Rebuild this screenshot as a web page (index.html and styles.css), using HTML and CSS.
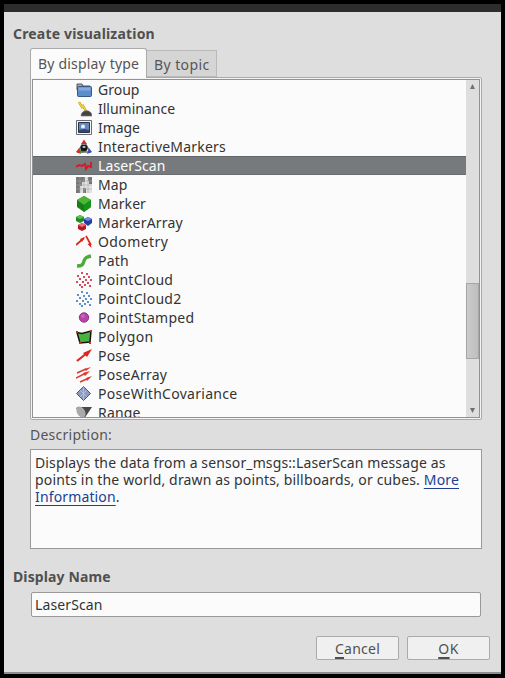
FILE: index.html
```html
<!DOCTYPE html>
<html lang="en">
<head>
<meta charset="utf-8">
<title>Create visualization</title>
<link rel="stylesheet" href="styles.css">
</head>
<body>
<main class="dialog">
  <h2 class="heading">Create visualization</h2>
  <div class="tabs"><div class="tab active"><span class="t-type">By display type</span></div><div class="tab"><span class="t-topic">By topic</span></div></div>
  <section class="pane">
    <div class="list-frame">
      <ul class="list">
        <li><svg viewBox="0 0 16 16"><path d="M1 3V2h5l1 2h7v4H1z" fill="#aaa" stroke="#555"/><rect x="1.5" y="4.5" width="14" height="10" rx="1" fill="#5c8dcb" stroke="#355886"/><path d="M2.5 5.5h12v3h-12z" fill="#85aadb"/></svg><span class="w-group">Group</span></li>
        <li><svg viewBox="0 0 16 16"><path d="M3 1l3 5 1-1 3 5" fill="none" stroke="#b79a1d" stroke-width="2.4"/><path d="M3 1l3 5 1-1 3 5" fill="none" stroke="#f7d526" stroke-width="1.4"/><path d="M5 15c0-7 11-7 11 0z" fill="#444" stroke="#777" stroke-width=".7"/></svg><span class="w-illum">Illuminance</span></li>
        <li><svg viewBox="0 0 16 16"><path d="M.5.5h15v14H.5z" fill="#f5f5f5" stroke="#6c6c6c"/><path d="M2.5 2.5h11v10h-11z" fill="#6487bd" stroke="#26364e"/><path d="M3 10l5-1 5 1v2H3z" fill="#334766"/><circle cx="7" cy="6.5" r="2" fill="#edf2fa"/></svg><span class="w-image">Image</span></li>
        <li><svg viewBox="0 0 16 16"><path d="M8 2l6 11H2z" fill="#eee" stroke="#777" stroke-width="1.5"/><path d="M8 1L5 5h6z" fill="#d92a28"/><path d="M3 9l-3 4 5 2z" fill="#d92a28"/><path d="M3 13l2-3 2 4z" fill="#32943b"/><path d="M13 9l3 4-5 2z" fill="#3355bb"/><circle cx="8" cy="9" r="3.5" fill="#171717"/><path d="M6 8l2-1 2 1-2 1z" fill="#eee"/></svg><span class="w-inter">InteractiveMarkers</span></li>
        <li class="selected"><svg viewBox="0 0 16 16"><path d="M0 9l3-2 3 1 3-2 1 5 2-3 3 1V4" fill="none" stroke="#df1722" stroke-width="1.9"/></svg><span class="w-laser">LaserScan</span></li>
        <li><svg viewBox="0 0 16 16"><path d="M0 0h16v16H0z" fill="#e2e2e2"/><path d="M0 0h9v5H6v4H4v7H0zM12 0h4v7h-3V4h-1zM7 11h3v5H7z" fill="#777"/><path d="M0 4h16M0 8h16M0 12h16M4 0v16M8 0v16M12 0v16" stroke="#aaa" stroke-width=".6"/></svg><span class="w-map">Map</span></li>
        <li><svg viewBox="0 0 16 16"><path d="M8 0l7 4v7l-7 5-7-5V4z" fill="#197d17"/><path d="M8 0l7 4-7 5-7-5z" fill="#4eb536"/><path d="M8 9v7l7-5V4z" fill="#17931b"/></svg><span class="w-marker">Marker</span></li>
        <li><svg viewBox="0 0 16 16"><path d="M4 0l4 2v4L4 8 0 6V2z" fill="#218b25"/><path d="M4 0l4 2-4 2-4-2z" fill="#62c352"/><path d="M12 2l4 2v4l-4 3-4-3V4z" fill="#263f9f"/><path d="M12 2l4 2-4 2-4-2z" fill="#6f8ee0"/><path d="M6 8l4 2v4l-4 2-4-2v-4z" fill="#b51723"/><path d="M6 8l4 2-4 2-4-2z" fill="#ed7079"/></svg><span class="w-marray">MarkerArray</span></li>
        <li><svg viewBox="0 0 16 16"><path d="M0 11l8-7M10 2l5 9" stroke="#d9291c" stroke-width="1.7"/><path d="M9 3L6 8 4 5zM15.5 14l-4-4 3-1z" fill="#d9291c"/></svg><span class="w-odom">Odometry</span></li>
        <li><svg viewBox="0 0 16 16"><path d="M1 13c6 0 6-2 7-5s2-4 7-5" fill="none" stroke="#4eaa39" stroke-width="3.4"/></svg><span class="w-path">Path</span></li>
        <li><svg viewBox="0 0 16 16"><path class="dots red" d="M6 1h0M11 2h0M2 4h0M8 5h0M13 5h0M4 7h0M10 8h0M15 8h0M1 10h0M7 10h0M12 11h0M4 13h0M9 13h0M14 14h0M6 15h0"/></svg><span class="w-pc">PointCloud</span></li>
        <li><svg viewBox="0 0 16 16"><path class="dots blue" d="M6 1h0M11 2h0M2 4h0M8 5h0M13 5h0M4 7h0M10 8h0M15 8h0M1 10h0M7 10h0M12 11h0M4 13h0M9 13h0M14 14h0M6 15h0"/></svg><span class="w-pc2">PointCloud2</span></li>
        <li><svg viewBox="0 0 16 16"><circle cx="8" cy="7.5" r="4.7" fill="#b345a7" stroke="#8c3384"/><circle cx="7" cy="6" r="2" fill="#c666bd"/></svg><span class="w-ps">PointStamped</span></li>
        <li><svg viewBox="0 0 16 16"><path d="M1 3.5l5 1 9-2.500-1 11-10 1z" fill="#48b33e" stroke="#151515" stroke-width="1.5"/><path d="M0 2h2v2H0zM14 1h2v2h-2zM13 13h2v2h-2zM3 13h2v2H3z" fill="#dd2a22"/></svg><span class="w-poly">Polygon</span></li>
        <li><svg viewBox="0 0 16 16"><path d="M1 13l10-8" stroke="#db271d" stroke-width="2.2"/><path d="M16 1l-5 8-4-4z" fill="#db271d"/></svg><span class="w-pose">Pose</span></li>
        <li><svg viewBox="0 0 16 16"><path d="M1 6l9-4M0 11l10-5M4 15l9-4" stroke="#dc3a30" stroke-width="1.5"/><path d="M15 0l-5 4-2-2zM14 4l-5 5-2-3zM16 9l-5 5-1-3z" fill="#dc3a30"/></svg><span class="w-parr">PoseArray</span></li>
        <li><svg viewBox="0 0 16 16"><path d="M7.5 .5l7 7-7 7-7-7z" fill="#8c9bc0" stroke="#48557c"/><path d="M7.5 1v13M4 4l7 7M11 4l-7 7" stroke="#bdc7df" stroke-width=".8"/></svg><span class="w-cov">PoseWithCovariance</span></li>
        <li><svg viewBox="0 0 16 16"><path d="M0 3l2-1h14L8 14z" fill="#484848"/><ellipse cx="5" cy="7" rx="4" ry="6" transform="rotate(-30 5 7)" fill="#a9a9a9"/></svg><span class="w-range">Range</span></li>
      </ul>
      <div class="scrollbar"><svg class="arrow" viewBox="0 0 13 13"><path d="M6.5 4L9 9H4z"/></svg><i class="thumb"></i><svg class="arrow" viewBox="0 0 13 13"><path d="M4 4h5L6.5 9z"/></svg></div>
    </div>
  </section>
  <div class="label"><span class="t-desc">Description:</span></div>
  <div class="description"><span class="d1">Displays the data from a sensor_msgs::LaserScan message as</span><br><span class="d2">points in the world, drawn as points, billboards, or cubes. <a>More</a></span><br><span class="d3"><a>Information</a>.</span></div>
  <h2 class="heading name-heading">Display Name</h2>
  <div class="input"><span class="w-laser">LaserScan</span></div>
  <div class="buttons"><div class="button"><span class="t-cancel"><u>C</u>ancel</span></div><div class="button"><span class="t-ok"><u>O</u>K</span></div></div>
</main>
</body>
</html>
```
FILE: styles.css
```css
* { box-sizing: border-box; }
body { margin: 0; background: #000; font: 14px "Noto Sans", sans-serif; color: #333; }
.dialog { width: 497px; height: 670px; margin: 4px; border-top: 8px solid #2d2d2d; border-bottom: 2px solid #8d8d8d; background: #dedede; display: flow-root; white-space: nowrap; }
.heading { margin: 12px 0 0 9px; font-size: 14px; line-height: 20px; height: 20px; color: #505050; letter-spacing: .18px; }
.tabs { display: flex; align-items: flex-end; height: 29px; margin: 4px 0 0 26px; }
.tab { height: 27px; width: 70px; padding-left: 7px; line-height: 27px; color: #555; background: #d5d5d5; border: 1px solid #b9b9b9; border-left: 0; }
.tab.active { position: relative; z-index: 1; width: 117px; height: 30px; margin-bottom: -1px; padding-left: 7px; line-height: 30px; background: #fbfbfb; border: 1px solid #aaa; border-bottom: 0; border-radius: 3px 3px 0 0; }
.pane { width: 452px; height: 343px; margin-left: 26px; padding: 1px; border: 1px solid #aaa; border-radius: 0 2px 2px 2px; background: #f4f4f4; }
.list-frame { display: flex; height: 339px; border: 1px solid #929292; background: #fbfbfb; overflow: hidden; }
.list { list-style: none; flex: 1; margin: 0; padding: 0; }
.list li { display: flex; align-items: center; height: 19px; padding-left: 43px; line-height: 19px; }
.list svg { width: 16px; height: 16px; margin-right: 6px; flex: none; }
.list .selected { background: #777a7c; border-top: 1px solid #626668; border-bottom: 1px solid #6b6e70; color: #fff; }
.w-image { letter-spacing: -.1px; }
.w-inter { letter-spacing: .2px; }
.w-laser { letter-spacing: .12px; }
.w-map, .w-marker { letter-spacing: .08px; }
.w-marray, .w-path, .w-range, .w-pose { letter-spacing: .2px; }
.w-odom { letter-spacing: .4px; }
.w-pc, .w-pc2, .w-ps, .w-poly, .w-parr, .w-cov { letter-spacing: .28px; }
.t-type { letter-spacing: .18px; }
.t-topic { letter-spacing: .42px; }
.t-desc { letter-spacing: .25px; }
.d1 { letter-spacing: .12px; }
.d2 { letter-spacing: .16px; }
.d3 { letter-spacing: .14px; }
.t-cancel { letter-spacing: .25px; }
.t-ok { letter-spacing: .5px; }
.dots { fill: none; stroke-width: 1.8; stroke-linecap: square; }
.red { stroke: #d6364b; }
.blue { stroke: #4a86c2; }
.scrollbar { display: flex; flex-direction: column; width: 13px; background: #dedede; }
.arrow { width: 13px; height: 13px; fill: #707070; }
.thumb { height: 76px; margin: 190px 0 45px; border: 1px solid #a5a5a5; background: linear-gradient(90deg, #cbcbcb, #bebebe); }
.label { height: 29px; margin-left: 26px; padding-top: 5px; line-height: 20px; color: #555; }
.description { width: 452px; height: 100px; margin-left: 26px; padding: 4px; line-height: 17px; border: 1px solid #999; background: #fbfbfb; }
.description a { color: #203f94; text-decoration: underline; text-underline-offset: 3px; text-decoration-thickness: 1px; text-decoration-skip-ink: none; }
.name-heading { margin-top: 18px; letter-spacing: .12px; }
.input { width: 450px; height: 25px; margin: 5px 0 0 27px; padding-left: 3px; line-height: 24px; border: 1px solid #999; border-radius: 2px; background: #fbfbfb; }
.buttons { display: flex; gap: 8px; margin: 19px 0 0 312px; }
.button { width: 83px; height: 24px; line-height: 23px; text-align: center; color: #505050; border: 1px solid #aaa; border-radius: 2px; background: #f0f0f0; }
.button u { text-underline-offset: 3px; text-decoration-thickness: 2px; }
```
